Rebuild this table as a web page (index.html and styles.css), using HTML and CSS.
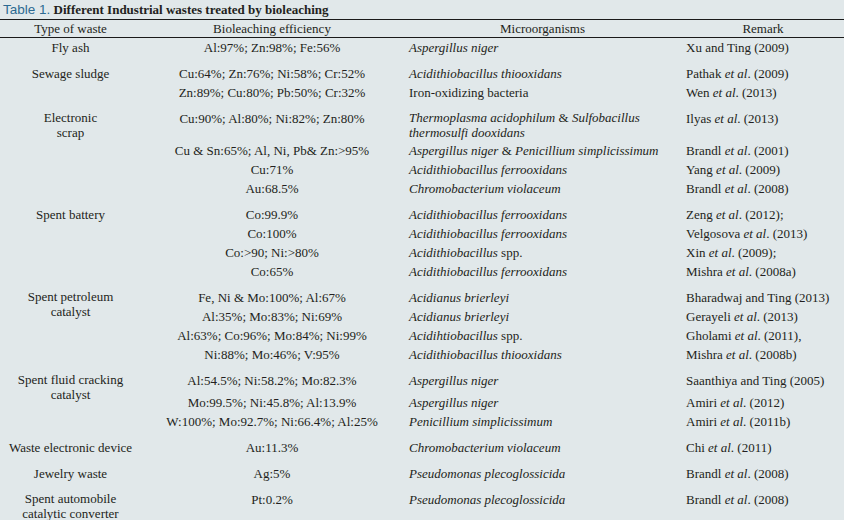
FILE: index.html
```html
<!DOCTYPE html>
<html>
<head>
<meta charset="utf-8">
<link rel="stylesheet" href="styles.css">
</head>
<body>
<div class="title"><span class="tlabel">Table 1.</span> <b class="tname">Different Industrial wastes treated by bioleaching</b></div>
<table class="tbl">
<colgroup>
<col class="c1"><col class="c2"><col class="c3"><col class="c4">
</colgroup>
<thead>
<tr><th>Type of waste</th><th>Bioleaching efficiency</th><th>Microorganisms</th><th>Remark</th></tr>
</thead>
<tbody class="grp">
<tr><td class="type">Fly ash</td><td class="eff">Al:97%; Zn:98%; Fe:56%</td><td class="org"><i>Aspergillus niger</i></td><td class="rem">Xu and Ting (2009)</td></tr>
</tbody>
<tbody class="grp">
<tr><td class="type" rowspan="2">Sewage sludge</td><td class="eff">Cu:64%; Zn:76%; Ni:58%; Cr:52%</td><td class="org"><i>Acidithiobacillus thiooxidans</i></td><td class="rem">Pathak <i>et al</i>. (2009)</td></tr>
<tr><td class="eff">Zn:89%; Cu:80%; Pb:50%; Cr:32%</td><td class="org">Iron-oxidizing bacteria</td><td class="rem">Wen <i>et al</i>. (2013)</td></tr>
</tbody>
<tbody class="grp">
<tr><td class="type wrap" rowspan="4">Electronic<br>scrap</td><td class="eff">Cu:90%; Al:80%; Ni:82%; Zn:80%</td><td class="org wrap2"><i>Thermoplasma acidophilum</i> &amp; <i>Sulfobacillus<br>thermosulfi dooxidans</i></td><td class="rem">Ilyas <i>et al</i>. (2013)</td></tr>
<tr><td class="eff">Cu &amp; Sn:65%; Al, Ni, Pb&amp; Zn:&gt;95%</td><td class="org"><i>Aspergillus niger</i> &amp; <i>Penicillium simplicissimum</i></td><td class="rem">Brandl <i>et al</i>. (2001)</td></tr>
<tr><td class="eff">Cu:71%</td><td class="org"><i>Acidithiobacillus ferrooxidans</i></td><td class="rem">Yang <i>et al</i>. (2009)</td></tr>
<tr><td class="eff">Au:68.5%</td><td class="org"><i>Chromobacterium violaceum</i></td><td class="rem">Brandl <i>et al</i>. (2008)</td></tr>
</tbody>
<tbody class="grp">
<tr><td class="type" rowspan="4">Spent battery</td><td class="eff">Co:99.9%</td><td class="org"><i>Acidithiobacillus ferrooxidans</i></td><td class="rem">Zeng <i>et al</i>. (2012);</td></tr>
<tr><td class="eff">Co:100%</td><td class="org"><i>Acidithiobacillus ferrooxidans</i></td><td class="rem">Velgosova <i>et al</i>. (2013)</td></tr>
<tr><td class="eff">Co:&gt;90; Ni:&gt;80%</td><td class="org"><i>Acidithiobacillus</i> spp.</td><td class="rem">Xin <i>et al</i>. (2009);</td></tr>
<tr><td class="eff">Co:65%</td><td class="org"><i>Acidithiobacillus ferrooxidans</i></td><td class="rem">Mishra <i>et al</i>. (2008a)</td></tr>
</tbody>
<tbody class="grp">
<tr><td class="type wrap" rowspan="4">Spent petroleum<br>catalyst</td><td class="eff">Fe, Ni &amp; Mo:100%; Al:67%</td><td class="org"><i>Acidianus brierleyi</i></td><td class="rem">Bharadwaj and Ting (2013)</td></tr>
<tr><td class="eff">Al:35%; Mo:83%; Ni:69%</td><td class="org"><i>Acidianus brierleyi</i></td><td class="rem">Gerayeli <i>et al</i>. (2013)</td></tr>
<tr><td class="eff">Al:63%; Co:96%; Mo:84%; Ni:99%</td><td class="org"><i>Acidihtiobacillus</i> spp.</td><td class="rem">Gholami <i>et al</i>. (2011),</td></tr>
<tr><td class="eff">Ni:88%; Mo:46%; V:95%</td><td class="org"><i>Acidithiobacillus thiooxidans</i></td><td class="rem">Mishra <i>et al</i>. (2008b)</td></tr>
</tbody>
<tbody class="grp">
<tr class="tall"><td class="type wrap" rowspan="3">Spent fluid cracking<br>catalyst</td><td class="eff">Al:54.5%; Ni:58.2%; Mo:82.3%</td><td class="org"><i>Aspergillus niger</i></td><td class="rem">Saanthiya and Ting (2005)</td></tr>
<tr><td class="eff">Mo:99.5%; Ni:45.8%; Al:13.9%</td><td class="org"><i>Aspergillus niger</i></td><td class="rem">Amiri <i>et al</i>. (2012)</td></tr>
<tr><td class="eff">W:100%; Mo:92.7%; Ni:66.4%; Al:25%</td><td class="org"><i>Penicillium simplicissimum</i></td><td class="rem">Amiri <i>et al</i>. (2011b)</td></tr>
</tbody>
<tbody class="grp">
<tr><td class="type">Waste electronic device</td><td class="eff">Au:11.3%</td><td class="org"><i>Chromobacterium violaceum</i></td><td class="rem">Chi <i>et al</i>. (2011)</td></tr>
</tbody>
<tbody class="grp">
<tr><td class="type">Jewelry waste</td><td class="eff">Ag:5%</td><td class="org"><i>Pseudomonas plecoglossicida</i></td><td class="rem">Brandl <i>et al</i>. (2008)</td></tr>
</tbody>
<tbody class="grp">
<tr><td class="type wrap">Spent automobile<br>catalytic converter</td><td class="eff">Pt:0.2%</td><td class="org"><i>Pseudomonas plecoglossicida</i></td><td class="rem">Brandl <i>et al</i>. (2008)</td></tr>
</tbody>
</table>
</body>
</html>
```
FILE: styles.css
```css
html, body {
  margin: 0;
  padding: 0;
  background: #e1e8ea;
}
body {
  width: 844px;
  height: 520px;
  overflow: hidden;
  color: #231f20;
  font-family: "Liberation Serif", "Times New Roman", serif;
  font-size: 13px;
}
.title {
  height: 19px;
  line-height: 19px;
  padding-left: 3px;
  white-space: nowrap;
}
.tlabel {
  font-family: "Liberation Sans", Arial, sans-serif;
  font-size: 13.5px;
  color: #2c6a92;
}
.tname {
  font-weight: bold;
  font-size: 13px;
}
.tbl {
  width: 844px;
  border-collapse: collapse;
  table-layout: fixed;
  border-top: 1px solid #1a1a1a;
}
.c1 { width: 141px; }
.c2 { width: 262px; }
.c3 { width: 279px; }
.c4 { width: 162px; }
.tbl thead th {
  font-weight: normal;
  text-align: center;
  line-height: 13px;
  padding: 2px 0 2px;
  height: 13px;
  border-bottom: 1px solid #1a1a1a;
}
.tbl td {
  line-height: 13px;
  padding: 3px 0;
  vertical-align: top;
  white-space: nowrap;
}
.grp tr:last-child td {
  padding-bottom: 10px;
}
.grp tr.tall td {
  padding-bottom: 6px;
}
.grp tr.tall td.type {
  padding-bottom: 3px;
}
.tbl td.wrap {
  line-height: 14.5px;
  padding-top: 2px;
}
.tbl td.wrap2 {
  line-height: 14.5px;
  padding-top: 2px;
  padding-bottom: 1px;
}
.type {
  text-align: center;
}
.eff {
  text-align: center;
}
.org {
  padding-left: 6px !important;
  text-align: left;
}
.rem {
  padding-left: 4px !important;
  text-align: left;
}
```
